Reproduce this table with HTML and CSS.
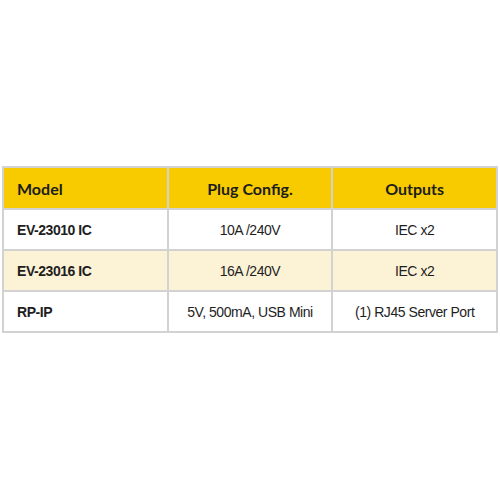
FILE: index.html
```html
<!DOCTYPE html>
<html>
<head>
<meta charset="utf-8">
<link rel="stylesheet" href="styles.css">
</head>
<body>
<div class="page">
  <table class="specs">
    <thead>
      <tr>
        <th class="col-model">Model</th>
        <th>Plug Config.</th>
        <th>Outputs</th>
      </tr>
    </thead>
    <tbody>
      <tr>
        <td class="model">EV-23010 IC</td>
        <td>10A /240V</td>
        <td>IEC x2</td>
      </tr>
      <tr class="alt">
        <td class="model">EV-23016 IC</td>
        <td>16A /240V</td>
        <td>IEC x2</td>
      </tr>
      <tr>
        <td class="model">RP-IP</td>
        <td>5V, 500mA, USB Mini</td>
        <td>(1) RJ45 Server Port</td>
      </tr>
    </tbody>
  </table>
</div>
</body>
</html>
```
FILE: styles.css
```css
html, body {
  margin: 0;
  padding: 0;
  background: #ffffff;
}
.page {
  width: 500px;
  height: 500px;
  padding: 166px 0 0 2px;
  box-sizing: border-box;
}
.specs {
  width: 496px;
  border-collapse: collapse;
  table-layout: fixed;
  font-family: "Liberation Sans", Arial, sans-serif;
  font-size: 14px;
  letter-spacing: -0.45px;
  color: #1e1e1e;
}
.specs th, .specs td {
  border: 2px solid #d2d2d2;
  text-align: center;
  padding: 0 13px;
}
.specs th {
  background: #f7cb00;
  font-family: Lato, "Liberation Sans", sans-serif;
  font-weight: 700;
  font-size: 16px;
  letter-spacing: 0;
  color: #1c1c1c;
  height: 40px;
}
.specs th.col-model {
  text-align: left;
}
.specs td {
  height: 39px;
}
.specs td.model {
  text-align: left;
  font-weight: 700;
}
.specs tr.alt td {
  background: #fcf3d7;
}
```
